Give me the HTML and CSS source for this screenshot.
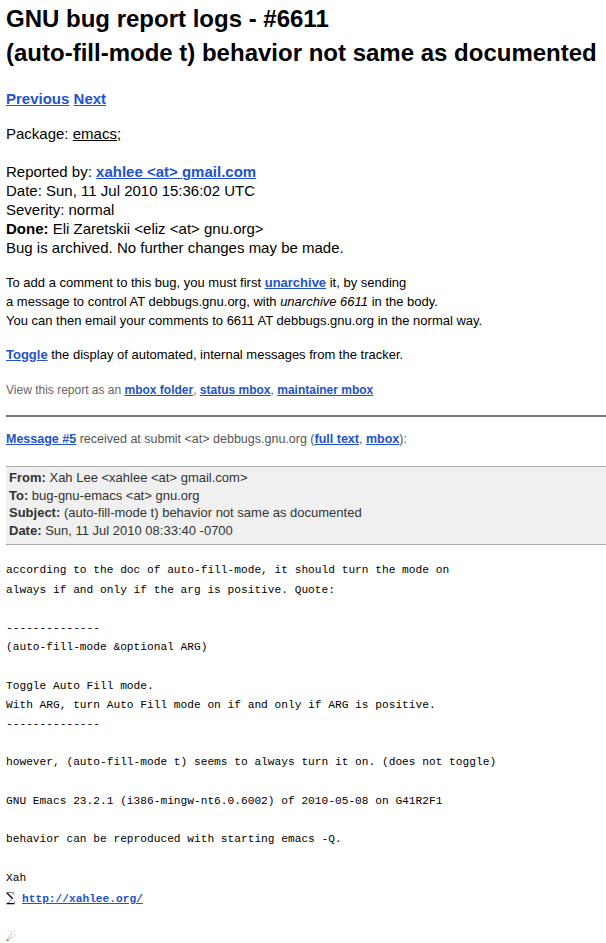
FILE: index.html
```html
<!DOCTYPE html>
<html lang="en">
<head>
    <meta charset="UTF-8">
    <title>#6611 - (auto-fill-mode t) behavior not same as documented - GNU bug report logs</title>
    <link rel="stylesheet" href="styles.css">
</head>
<body>
<h1>GNU bug report logs - #6611<br>(auto-fill-mode t) behavior not same as documented</h1>

<div class="nav">
    <a href="#">Previous</a> <a href="#">Next</a>
</div>

<div class="buginfo">
    <p>Package: <a class="pkg" href="#">emacs</a>;</p>

    <p>Reported by: <a href="#">xahlee &lt;at&gt; gmail.com</a><br>
        Date: Sun, 11 Jul 2010 15:36:02 UTC<br>
        Severity: normal<br>
        <strong>Done:</strong> Eli Zaretskii &lt;eliz &lt;at&gt; gnu.org&gt;<br>
        Bug is archived. No further changes may be made.</p>
</div>

<p class="note">To add a comment to this bug, you must first <a href="#">unarchive</a> it, by sending<br>
    a message to control AT debbugs.gnu.org, with <em>unarchive 6611</em> in the body.<br>
    You can then email your comments to 6611 AT debbugs.gnu.org in the normal way.</p>

<p class="note toggle"><a href="#">Toggle</a> the display of automated, internal messages from the tracker.</p>

<p class="mboxes">View this report as an <a href="#">mbox folder</a>, <a href="#">status mbox</a>, <a href="#">maintainer mbox</a></p>

<hr>

<div class="msgreceived">
    <p><a href="#">Message #5</a> received at submit &lt;at&gt; debbugs.gnu.org (<a href="#">full text</a>, <a href="#">mbox</a>):</p>
</div>

<div class="headers">
    <div><strong>From:</strong> Xah Lee &lt;xahlee &lt;at&gt; gmail.com&gt;</div>
    <div><strong>To:</strong> bug-gnu-emacs &lt;at&gt; gnu.org</div>
    <div><strong>Subject:</strong> (auto-fill-mode t) behavior not same as documented</div>
    <div><strong>Date:</strong> Sun, 11 Jul 2010 08:33:40 -0700</div>
</div>

<pre class="message">according to the doc of auto-fill-mode, it should turn the mode on
always if and only if the arg is positive. Quote:

--------------
(auto-fill-mode &amp;optional ARG)

Toggle Auto Fill mode.
With ARG, turn Auto Fill mode on if and only if ARG is positive.
--------------

however, (auto-fill-mode t) seems to always turn it on. (does not toggle)

GNU Emacs 23.2.1 (i386-mingw-nt6.0.6002) of 2010-05-08 on G41R2F1

behavior can be reproduced with starting emacs -Q.

Xah
<span class="sigma">∑</span> <a href="#">http://xahlee.org/</a>

<span class="comet">☄</span></pre>
</body>
</html>
```

FILE: styles.css
```css
html {
    overflow-x: hidden;
}

body {
    margin: 0 0 0 6px;
    font-family: "Liberation Sans", Arial, sans-serif;
    font-size: 15px;
    line-height: 19px;
    color: #000;
    background: #fff;
}

a {
    color: #2253cc;
    font-weight: bold;
}

h1 {
    margin: 2px 0 0 0;
    font-size: 24px;
    line-height: 34px;
    font-weight: bold;
}

div.nav {
    margin: 19px 0 0 0;
    font-size: 15px;
}

div.buginfo p {
    margin: 16px 0 0 0;
}

div.buginfo p + p {
    margin-top: 19px;
}

a.pkg {
    color: #000;
    font-weight: normal;
}

p.note {
    margin: 16px 0 0 0;
    font-size: 13px;
    line-height: 19px;
}

p.toggle {
    margin-top: 15px;
}

p.mboxes {
    margin: 18px 0 0 0;
    font-size: 12px;
    line-height: 17px;
    color: #666;
}

hr {
    margin: 16px 0 0 0;
    border: 0;
    border-top: 2px solid #777;
    height: 0;
}

div.msgreceived p {
    margin: 14px 0 0 0;
    font-size: 12.5px;
    line-height: 17px;
    color: #555;
}

div.headers {
    margin: 18px -4px 0 -1px;
    padding: 2px 3px 5px 3px;
    border: 1px solid #aaa;
    background: #f0f0f0;
    font-size: 13px;
    line-height: 17.6px;
    color: #333;
}

pre.message {
    margin: 16px 0 0 0;
    font-family: "Liberation Mono", "Courier New", monospace;
    font-size: 11.2px;
    line-height: 19.2px;
    color: #000;
}

pre.message a {
    color: #2253cc;
}

.sigma {
    font-family: "DejaVu Serif", serif;
    font-size: 13px;
}

.comet {
    font-family: "DejaVu Sans", sans-serif;
    font-size: 11px;
    color: #000;
}
```
